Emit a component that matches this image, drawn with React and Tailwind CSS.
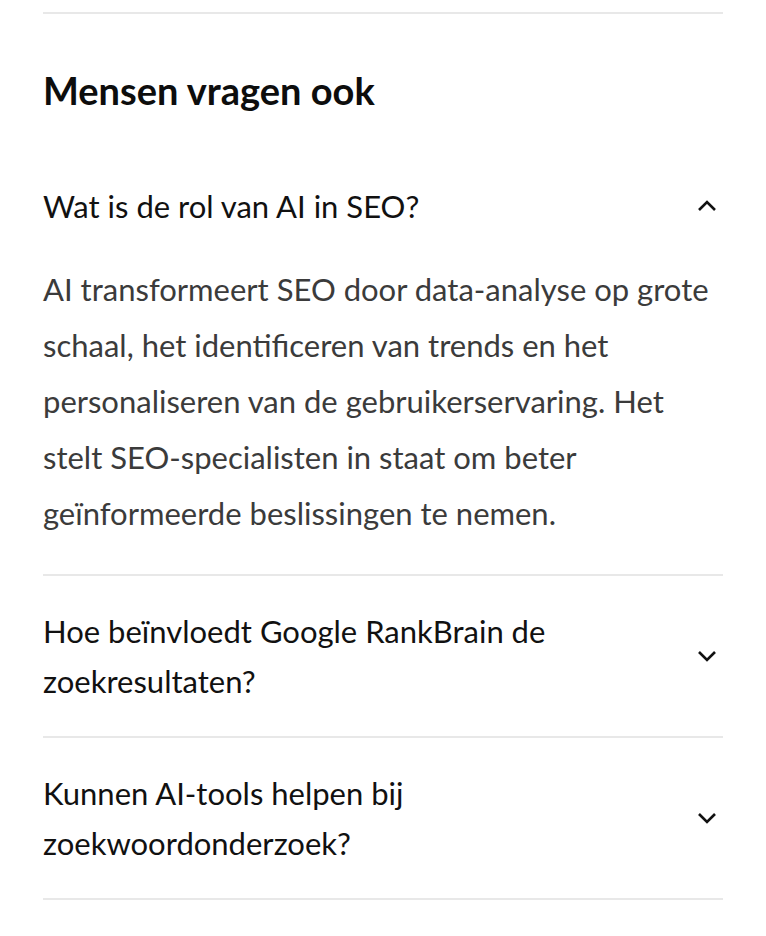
import React, { useState } from 'react';

const faqs = [
  {
    q: 'Wat is de rol van AI in SEO?',
    a: 'AI transformeert SEO door data-analyse op grote schaal, het identificeren van trends en het personaliseren van de gebruikerservaring. Het stelt SEO-specialisten in staat om beter geïnformeerde beslissingen te nemen.',
  },
  {
    q: 'Hoe beïnvloedt Google RankBrain de zoekresultaten?',
    a: 'RankBrain gebruikt machine learning om zoekopdrachten beter te begrijpen en de meest relevante resultaten te tonen.',
  },
  {
    q: 'Kunnen AI-tools helpen bij zoekwoordonderzoek?',
    a: 'Ja, AI-tools kunnen grote hoeveelheden zoekdata analyseren en nieuwe zoekwoordkansen ontdekken.',
  },
];

const Chevron = ({ open }) => (
  <svg
    width="20"
    height="12"
    viewBox="0 0 20 12"
    fill="none"
    stroke="#111"
    strokeWidth="2.6"
    className={open ? 'rotate-180' : ''}
  >
    <path d="M2 2l8 8 8-8" />
  </svg>
);

export default function App() {
  const [open, setOpen] = useState(0);

  return (
    <div className="min-h-screen bg-white pt-3 font-['Lato',sans-serif]">
      <section className="mx-[43px] border-t-2 border-[#e8e8e8] pt-[52px]">
        <h2 className="text-[38px] font-bold leading-[48px] text-[#0d0d0d]">
          Mensen vragen ook
        </h2>

        <div className="mt-[37px]">
          {faqs.map((item, i) => (
            <div key={i} className="border-b-2 border-[#e8e8e8]">
              <button
                onClick={() => setOpen(open === i ? -1 : i)}
                className="flex w-full items-center justify-between gap-6 pt-[30px] pb-[30px] text-left"
              >
                <span className="max-w-[620px] text-[31px] leading-[50px] text-[#111]">
                  {item.q}
                </span>
                <span className="mr-[6px] shrink-0">
                  <Chevron open={open === i} />
                </span>
              </button>
              {open === i && (
                <p className="pb-[33px] text-[31px] leading-[56px] text-[#3b3b3b]">
                  {item.a}
                </p>
              )}
            </div>
          ))}
        </div>
      </section>
    </div>
  );
}
